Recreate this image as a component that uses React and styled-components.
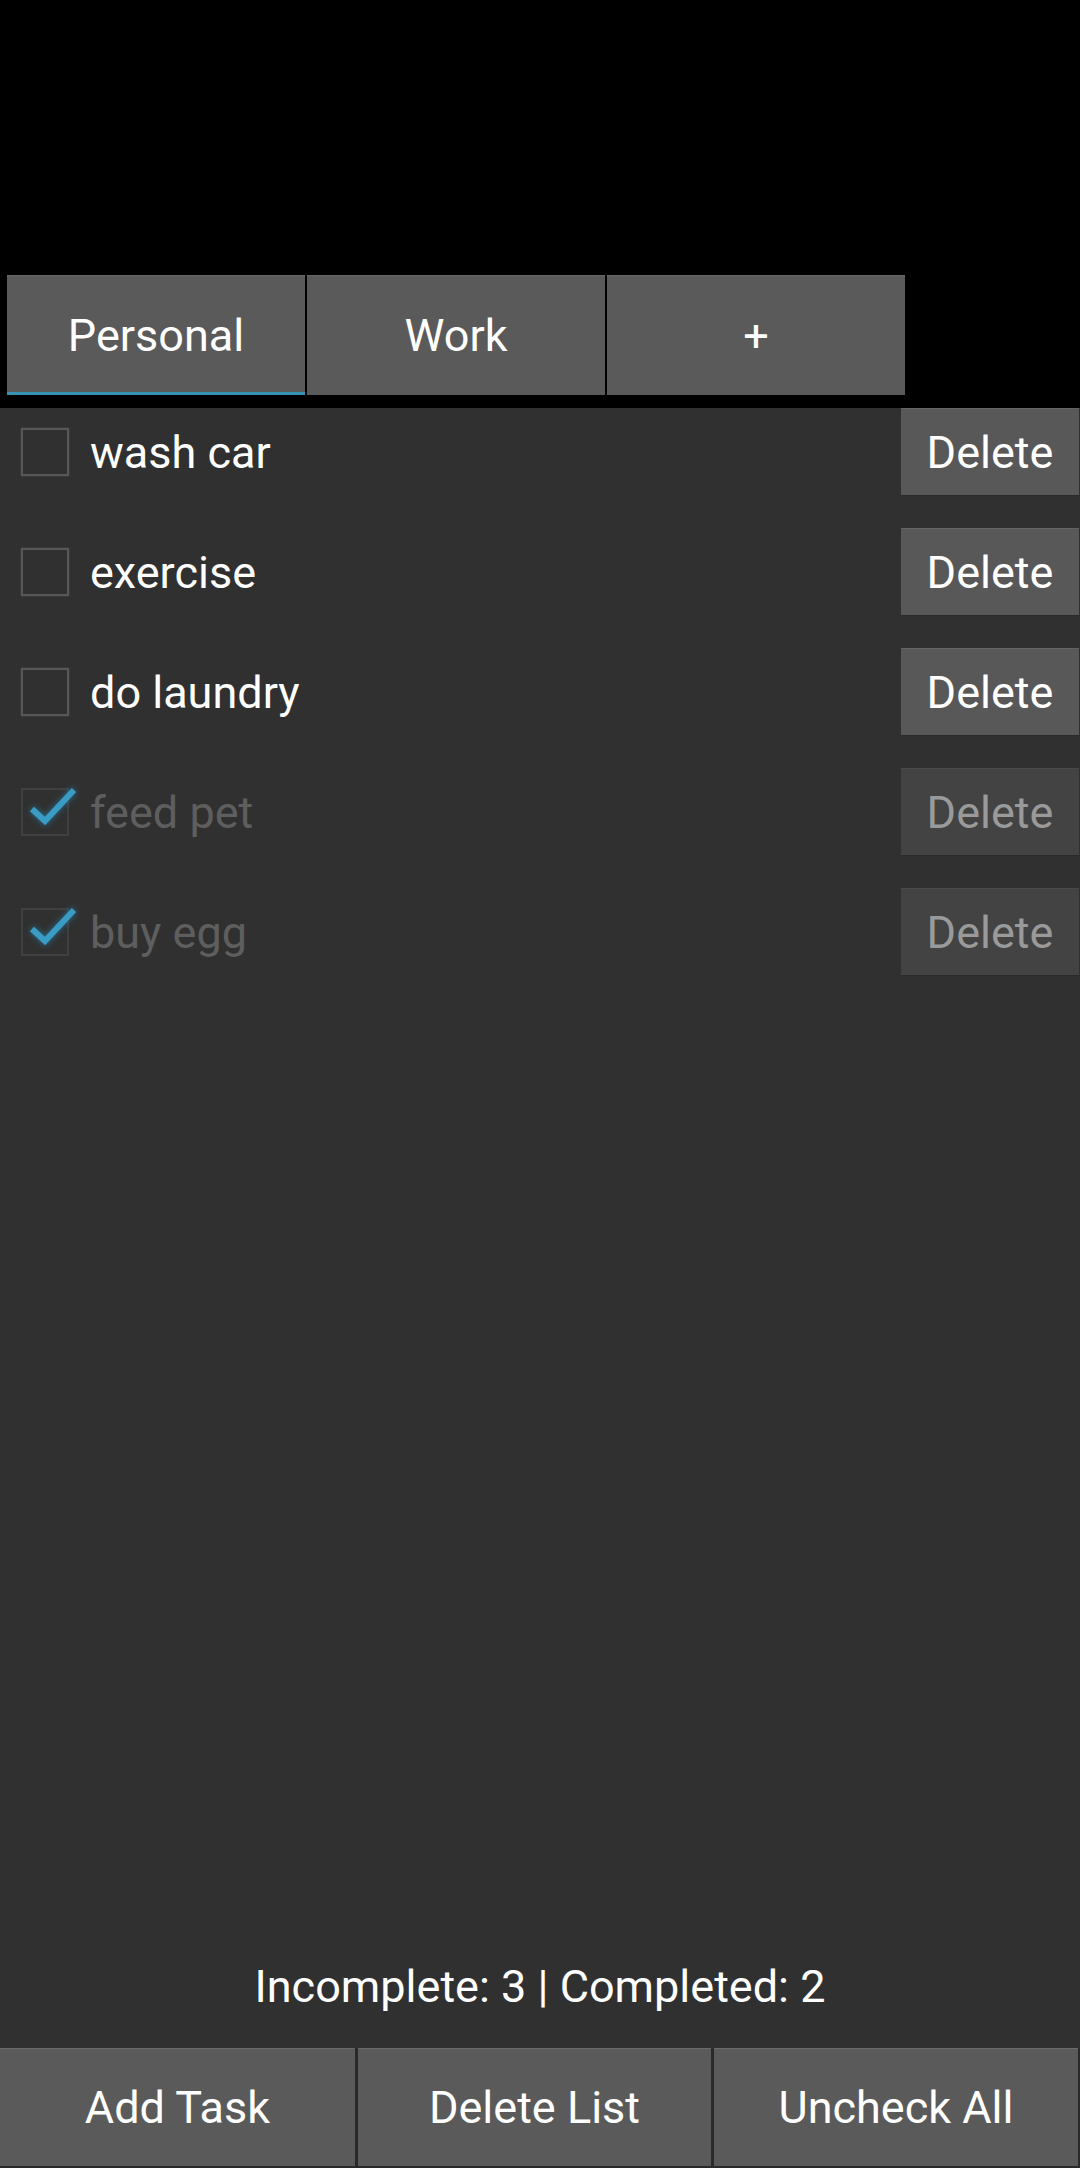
import React from "react"
import styled, { createGlobalStyle } from "styled-components"

const GlobalStyle = createGlobalStyle`
  html, body {
    margin: 0;
    padding: 0;
    background: #000;
  }
  body {
    font-family: Roboto, "Noto Sans", "Liberation Sans", sans-serif;
  }
`

const Screen = styled.div`
  width: 1080px;
  height: 2168px;
  display: flex;
  flex-direction: column;
  background: #000;
  overflow: hidden;
`

const TopSpace = styled.div`
  height: 275px;
  flex: none;
`

const TabBar = styled.div`
  display: flex;
  gap: 2px;
  padding: 0 0 13px 7px;
  flex: none;
`

const Tab = styled.div`
  width: 298px;
  height: 120px;
  box-sizing: border-box;
  display: flex;
  align-items: center;
  justify-content: center;
  background: #5a5a5a;
  border-top: 1px solid #666;
  border-bottom: 3px solid ${(p) => (p.$active ? "#3592b3" : "#5a5a5a")};
  color: #fff;
  font-size: 45px;
  padding-top: 2px;
`

const Main = styled.div`
  flex: 1;
  display: flex;
  flex-direction: column;
  background: #303030;
`

const TaskList = styled.ul`
  flex: 1;
  list-style: none;
  margin: 0;
  padding: 0;
`

const Row = styled.li`
  display: flex;
  align-items: center;
  height: 88px;
  margin-bottom: 32px;
`

const Box = styled.span`
  position: relative;
  width: 48px;
  height: 48px;
  box-sizing: border-box;
  margin-left: 21px;
  border: 2px solid ${(p) => (p.$checked ? "#3f3f3f" : "#585858")};
  box-shadow: 0 0 2px ${(p) => (p.$checked ? "#333" : "#4a4a4a")};
  flex: none;
`

const Tick = styled.svg`
  position: absolute;
  left: -2px;
  top: -2px;
  overflow: visible;
  filter: drop-shadow(0 0 3px rgba(40, 120, 160, 0.9));
`

const Label = styled.span`
  margin-left: 21px;
  font-size: 45px;
  color: ${(p) => (p.$done ? "#5e5e5e" : "#fff")};
`

const DeleteButton = styled.button`
  margin-left: auto;
  margin-right: 1px;
  width: 178px;
  height: 88px;
  box-sizing: border-box;
  border: none;
  border-top: 1px solid ${(p) => (p.$done ? "#4a4a4a" : "#646464")};
  border-bottom: 1px solid #2a2a2a;
  background: ${(p) => (p.$done ? "#434343" : "#585858")};
  color: ${(p) => (p.$done ? "#9a9a9a" : "#fff")};
  font-family: inherit;
  font-size: 45px;
  padding: 0;
`

const Status = styled.div`
  text-align: center;
  color: #fff;
  font-size: 45px;
  line-height: 50px;
  padding-bottom: 36px;
`

const Footer = styled.div`
  display: grid;
  grid-template-columns: 355px 353px 1fr;
  gap: 3px;
  padding: 0 2px 2px 0;
  background: #2a2a2a;
`

const FooterButton = styled.button`
  height: 118px;
  box-sizing: border-box;
  border: none;
  border-top: 1px solid #6a6a6a;
  background: #5a5a5a;
  color: #fff;
  font-family: inherit;
  font-size: 45px;
  padding: 0;
`

const tasks = [
  { name: "wash car", done: false },
  { name: "exercise", done: false },
  { name: "do laundry", done: false },
  { name: "feed pet", done: true },
  { name: "buy egg", done: true },
]

const App = () => {
  const completed = tasks.filter((t) => t.done).length
  return (
    <>
      <GlobalStyle />
      <Screen>
        <TopSpace />
        <TabBar>
          <Tab $active>Personal</Tab>
          <Tab>Work</Tab>
          <Tab>+</Tab>
        </TabBar>
        <Main>
          <TaskList>
            {tasks.map((t) => (
              <Row key={t.name}>
                <Box $checked={t.done}>
                  {t.done && (
                    <Tick width="48" height="48" viewBox="0 0 48 48">
                      <polyline
                        points="11,21 24,33 53,2"
                        fill="none"
                        stroke="#3a9cc4"
                        strokeWidth="6"
                      />
                    </Tick>
                  )}
                </Box>
                <Label $done={t.done}>{t.name}</Label>
                <DeleteButton $done={t.done}>Delete</DeleteButton>
              </Row>
            ))}
          </TaskList>
          <Status>
            Incomplete: {tasks.length - completed} | Completed: {completed}
          </Status>
          <Footer>
            <FooterButton>Add Task</FooterButton>
            <FooterButton>Delete List</FooterButton>
            <FooterButton>Uncheck All</FooterButton>
          </Footer>
        </Main>
      </Screen>
    </>
  )
}

export default App
